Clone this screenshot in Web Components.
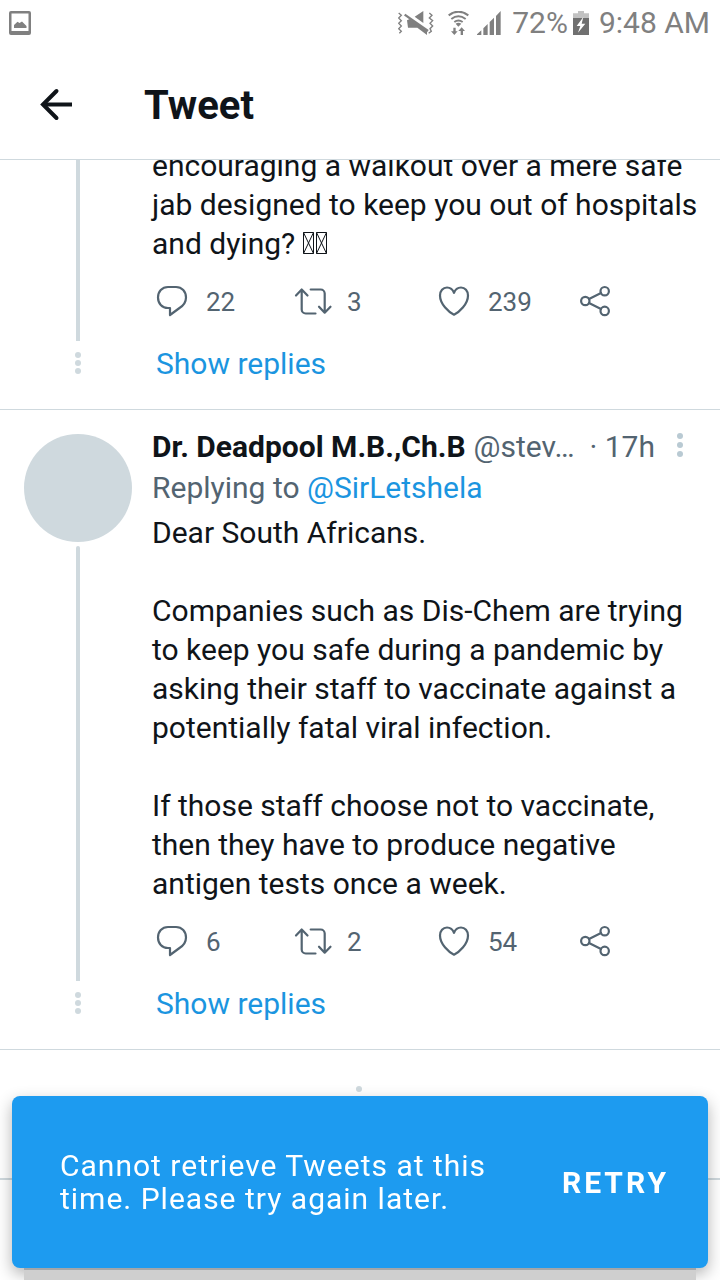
<!DOCTYPE html>
<html lang="en">
<head>
<meta charset="utf-8">
<meta name="viewport" content="width=device-width, initial-scale=1">
<title>Tweet</title>
<style>
  :root {
    --ink: #0f1419;
    --muted: #536471;
    --line: #cfd9de;
    --link: #1b95e0;
    --accent: #1d9bf0;
    --status: #808080;
  }
  body {
    margin: 0;
    background: #fff;
    color: var(--ink);
    font: 30px/39px Roboto, "Noto Sans", sans-serif;
  }
</style>
</head>
<body>
<tweet-page></tweet-page>

<script>
const define = (name, html, setup) => {
  const template = document.createElement('template');
  template.innerHTML = html;
  customElements.define(name, class extends HTMLElement {
    constructor() {
      super();
      this.attachShadow({ mode: 'open' }).append(template.content.cloneNode(true));
    }
    connectedCallback() {
      if (setup) setup(this, this.shadowRoot);
    }
  });
};

const ICONS = {
  reply: '<path d="M16 6h8c6 0 10 4.500 10 10.500 0 4.500-2.500 8-6.500 10.500L18 34v-7h-2C10 27 6 22.500 6 16.500S10 6 16 6z"/>',
  retweet: '<path d="M3 14.500 8.700 8.500 14.500 14.500M8.700 9v19.500a4 4 0 0 0 4 4H22.500M17.700 8.500h10a4 4 0 0 1 4 4V31.500M26 25.700l5.700 6 5.800-6"/>',
  like: '<path d="M20 33.700C14.500 31 6 23 6 14.500 6 9.800 9 6.500 13 6.500c3.200 0 5.800 2 7 5.300 1.200-3.300 3.800-5.300 7-5.300 4 0 7 3.300 7 8 0 8.500-8.500 16.500-14 19.200z"/>',
  share: '<circle cx="10.300" cy="20" r="4.200"/><circle cx="29.700" cy="10.200" r="4.200"/><circle cx="29.700" cy="29.900" r="4.200"/><path d="m14 18 12-6M14 22l12 6"/>'
};

/* Status bar: notification on the left, radios, battery and clock on the right */
define('status-bar', `
  <style>
    :host { display: flex; align-items: center; justify-content: space-between; height: 48px; padding: 0 10px 2px 9px;
      box-sizing: border-box; color: var(--status); font-size: 30px; line-height: 46px; }
    svg { display: block; fill: currentColor; }
    .right { display: flex; align-items: center; }
    .wifi { margin-left: 14px; }
    .signal { margin-left: 8px; }
    .level { margin-left: 11px; }
    .battery { margin: 0 10px 0 5px; }
  </style>
  <svg width="22" height="24" viewBox="0 0 22 24" aria-label="Screenshot saved"><path fill-rule="evenodd" d="M2 0h18q2 0 2 2v20q0 2-2 2H2q-2 0-2-2V2q0-2 2-2zm.500 2.500v17.500h17V2.500z"/><path d="M5 17v-3l3.500-3.300 2 1.300L13 10.500l4.500 4.500v2z"/></svg>
  <div class="right">
    <svg width="36" height="24" viewBox="0 0 108 72" aria-label="Vibrate"><path fill="none" stroke="currentColor" stroke-width="4" d="M2 6l8 7-8 8 8 8-8 8 8 8-8 8 8 8-6 6M94 6l8 7-8 8 10 8-8 8 8 8-8 8 4 8-8 6"/><path d="M50 17 76 0v36zM27 28l8-4 52 32v16L58 50H30z"/><path stroke="currentColor" stroke-width="7" d="M20 11 90 60"/></svg>
    <svg class="wifi" width="21" height="24" viewBox="0 0 63 72" aria-label="Wi-Fi"><g fill="none" stroke="currentColor" stroke-width="6"><path d="M2 13Q31-9 61 13M10 24Q31 8 53 24M19 33Q31 24 44 33"/></g><path d="m23 38q8-5 17 0l-9 9zM16 50h7v11h6L19 72 9 61h7zM38 72h7V60h6L41 49 31 60h7z"/></svg>
    <svg class="signal" width="24" height="24" viewBox="0 0 72 72" aria-label="Signal"><path d="M0 72V70l13-12v14zM19 72V52l13-13v33zM38 72V33l13-13v52zM57 72V15L71 0v72z"/></svg>
    <span class="level">72%</span>
    <svg class="battery" width="16" height="24" viewBox="0 0 48 72" aria-label="Charging"><path fill="#c2c2c2" d="M15 0h18v7h15v15H0V7h15z"/><path fill="#707070" d="M0 21h48v51H0z"/><path fill="#fff" d="M31 18 11 45h11l-7 20 22-27H26z"/></svg>
    <time>9:48 AM</time>
  </div>
`);

define('app-bar', `
  <style>
    :host { display: flex; align-items: center; height: 112px; padding: 0 32px; box-sizing: border-box; background: #fff;
      border-bottom: 1px solid var(--line); }
    button { display: block; border: 0; padding: 0; margin: 0 64px 0 0; background: none; color: inherit; }
    svg { display: block; fill: none; stroke: currentColor; stroke-width: 4; stroke-linecap: round; }
    h1 { margin: 0; padding-top: 4px; font-size: 40px; line-height: 48px; font-weight: 700; }
  </style>
  <button type="button" aria-label="Back"><svg width="48" height="48" viewBox="0 0 48 48"><path d="M24.500 11 11 24.500 24.500 38"/><path stroke-linecap="butt" d="M11 24.500H40"/></svg></button>
  <h1><slot></slot></h1>
`);

define('tweet-action', `
  <style>
    :host { display: block; }
    button { display: flex; align-items: center; gap: 14px; height: 40px; border: 0; padding: 0; background: none;
      color: var(--muted); font: inherit; font-size: 26px; line-height: 38px; }
    span { padding-top: 2px; }
    svg { display: block; fill: none; stroke: currentColor; stroke-width: 2.200; stroke-linecap: round; stroke-linejoin: round; }
  </style>
  <button type="button"><svg width="40" height="40" viewBox="0 0 40 40"></svg><span><slot></slot></span></button>
`, (host, root) => {
  const kind = host.getAttribute('kind');
  root.querySelector('svg').innerHTML = ICONS[kind];
  root.querySelector('button').setAttribute('aria-label', (kind + ' ' + host.textContent).trim());
});

/* Stands for a character the device has no glyph for */
define('unknown-char', `
  <style>
    :host { display: inline-block; width: 13px; height: 22px; vertical-align: 0; }
    svg { display: block; fill: none; stroke: currentColor; }
  </style>
  <svg width="11" height="22" viewBox="0 0 11 22"><path d="M.500.500h10v21H.500zL10.500 21.500M10.500.500.500 21.500"/></svg>
`);

define('tweet-item', `
  <style>
    :host { display: block; border-bottom: 1px solid var(--line); }
    article { display: grid; grid-template-columns: 152px minmax(0, 1fr); padding-bottom: 24px; }
    .rail { display: flex; flex-direction: column; align-items: center; padding-right: 20px; padding-left: 24px; }
    .avatar { width: 108px; height: 108px; margin: 24px 0 4px; border-radius: 50%; background: var(--line); }
    .line { flex: 1; width: 4px; border-radius: 2px 2px 0 0; background: var(--line); }
    .content { padding: 16px 4px 20px 0; }
    .text { padding-right: 12px; }
    .head { display: flex; align-items: center; padding-right: 33px; line-height: 41px; color: var(--muted); white-space: nowrap; }
    .name { color: var(--ink); font-weight: 700; margin-right: 8px; }
    .when { margin-left: auto; }
    .more { border: 0; padding: 0; margin-left: 22px; background: none; color: #b9cad3; }
    .more svg, .dots svg { display: block; fill: currentColor; }
    .reply-to { line-height: 41px; color: var(--muted); margin-bottom: 5px; }
    .actions { display: grid; grid-template-columns: repeat(4, 1fr); margin-top: 18px; }
    .dots { display: flex; justify-content: center; align-items: center; height: 44px; padding: 0 20px 0 24px; color: var(--line); }
    .show { height: 44px; padding-left: 4px; line-height: 46px; }
    a { color: var(--link); text-decoration: none; }
    :host([continued]) .avatar, :host([continued]) .head, :host([continued]) .reply-to { display: none; }
    :host([continued]) .content { padding-top: 0; }
  </style>
  <article>
    <div class="rail"><div class="avatar"></div><div class="line"></div></div>
    <div class="content">
      <div class="head">
        <span class="name"><slot name="name"></slot></span>
        <span><slot name="handle"></slot></span>
        <span class="when"><slot name="when"></slot></span>
        <button class="more" type="button" aria-label="More"><svg width="6" height="28" viewBox="0 0 6 28"><circle cx="3" cy="3" r="3"/><circle cx="3" cy="12" r="3"/><circle cx="3" cy="21" r="3"/></svg></button>
      </div>
      <div class="reply-to"><slot name="reply-to"></slot></div>
      <div class="text"><slot></slot></div>
      <div class="actions"><slot name="actions"></slot></div>
    </div>
    <div class="dots"><svg width="6" height="22" viewBox="0 0 6 22"><circle cx="3" cy="3" r="3"/><circle cx="3" cy="11" r="3"/><circle cx="3" cy="19" r="3"/></svg></div>
    <div class="show"><a href="#replies">Show replies</a></div>
  </article>
`);

define('loading-row', `
  <style>
    :host { display: flex; justify-content: center; height: 130px; padding: 36px 2px 0 0; box-sizing: border-box; border-bottom: 2px solid var(--line); }
    i { width: 6px; height: 6px; border-radius: 50%; background: var(--line); }
  </style>
  <i></i>
`);

define('snack-bar', `
  <style>
    :host { position: fixed; left: 12px; right: 12px; bottom: 12px; display: flex; align-items: center;
      justify-content: space-between; min-height: 172px; padding: 0 39px 0 48px; box-sizing: border-box; border-radius: 8px;
      background: var(--accent); color: #fff; font-size: 30px; line-height: 33px; letter-spacing: 1px;
      box-shadow: 0 14px 0 -12px #a3a6a9, 0 24px 0 -12px #cfcfcf, 0 6px 16px rgba(0, 0, 0, .3); }
    p { margin: 0; max-width: 450px; }
    button { border: 0; padding: 0; background: none; color: inherit; font: inherit; font-weight: 700; letter-spacing: 3px; }
  </style>
  <p role="alert"><slot></slot></p>
  <button type="button"><slot name="action"></slot></button>
`);

define('tweet-page', `
  <style>
    :host { display: block; }
    header { position: relative; z-index: 1; background: #fff; }
    main { margin-top: -14px; padding-bottom: 100px; }
    p { margin: 0 0 39px; }
    p:last-of-type { margin-bottom: 0; }
    a { color: var(--link); text-decoration: none; }
  </style>
  <header>
    <status-bar></status-bar>
    <app-bar>Tweet</app-bar>
  </header>
  <main>
    <tweet-item continued>
      <p>encouraging a walkout over a mere safe jab designed to keep you out of hospitals and dying? <unknown-char></unknown-char><unknown-char></unknown-char></p>
      <tweet-action slot="actions" kind="reply">22</tweet-action>
      <tweet-action slot="actions" kind="retweet">3</tweet-action>
      <tweet-action slot="actions" kind="like">239</tweet-action>
      <tweet-action slot="actions" kind="share"></tweet-action>
    </tweet-item>
    <tweet-item>
      <span slot="name">Dr. Deadpool M.B.,Ch.B</span>
      <span slot="handle">@stev…</span>
      <span slot="when">· 17h</span>
      <span slot="reply-to">Replying to <a href="#SirLetshela">@SirLetshela</a></span>
      <p>Dear South Africans.</p>
      <p>Companies such as Dis-Chem are trying to keep you safe during a pandemic by asking their staff to vaccinate against a potentially fatal viral infection.</p>
      <p>If those staff choose not to vaccinate, then they have to produce negative antigen tests once a week.</p>
      <tweet-action slot="actions" kind="reply">6</tweet-action>
      <tweet-action slot="actions" kind="retweet">2</tweet-action>
      <tweet-action slot="actions" kind="like">54</tweet-action>
      <tweet-action slot="actions" kind="share"></tweet-action>
    </tweet-item>
    <loading-row></loading-row>
  </main>
  <snack-bar>Cannot retrieve Tweets at this time. Please try again later.<span slot="action">RETRY</span></snack-bar>
`);
</script>
</body>
</html>
